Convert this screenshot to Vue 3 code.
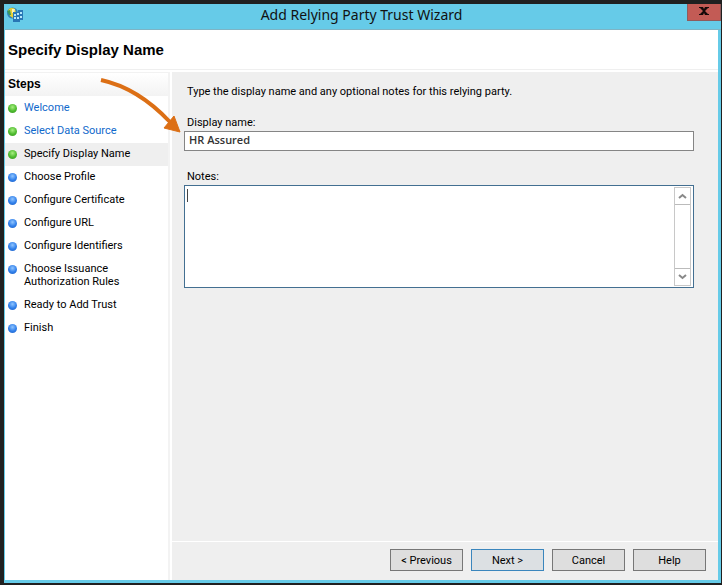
<script setup>
import { ref } from 'vue'

const steps = [
  { label: 'Welcome', state: 'done', visited: true },
  { label: 'Select Data Source', state: 'done', visited: true },
  { label: 'Specify Display Name', state: 'done', current: true },
  { label: 'Choose Profile', state: 'todo' },
  { label: 'Configure Certificate', state: 'todo' },
  { label: 'Configure URL', state: 'todo' },
  { label: 'Configure Identifiers', state: 'todo' },
  { label: 'Choose Issuance Authorization Rules', state: 'todo' },
  { label: 'Ready to Add Trust', state: 'todo' },
  { label: 'Finish', state: 'todo' }
]

const displayName = ref('HR Assured')
const notes = ref('')
</script>

<template>
  <div class="desktop">
    <div class="window">
      <header class="title-bar">
        <svg class="app-icon" width="18" height="18" viewBox="0 0 18 18">
          <circle cx="6.500" cy="7" r="5.500" fill="#2f83b8" />
          <path d="M2 4Q5 0 9 3L10 7L7 12L4 10Z" fill="#e6cf35" />
          <path d="M1 5L4 4L5 9L3 9Z" fill="#3b9a5a" />
          <path d="M6 3L9 3L8 7L6 7Z" fill="#f7f2bb" />
          <path d="M7 6H12V4H17V14H14V16H7Z" fill="#2877b5" />
          <path d="M8 8h2v2h-2zM11 7h2v2h-2zM14 6h2v2h-2zM8 11h2v2h-2zM11 11h2v2h-2zM14 10h2v2h-2z" fill="#b5e7fa" />
        </svg>
        <h1 class="title">Add Relying Party Trust Wizard</h1>
        <button class="close" aria-label="Close">
          <svg width="10" height="8" viewBox="0 0 10 8">
            <path d="M0 0H4L5 2L6 0H10V1H9L6 4L9 7H10V8H6L5 6L4 8H0V7H1L4 4L1 1H0Z" fill="#160808" />
          </svg>
        </button>
      </header>

      <div class="page-header">
        <h2>Specify Display Name</h2>
      </div>

      <div class="body">
        <nav class="sidebar">
          <h3 class="steps-title">Steps</h3>
          <ul class="steps">
            <li v-for="step in steps" :key="step.label" class="step" :class="{ current: step.current }">
              <span class="dot" :class="step.state"></span>
              <a v-if="step.visited" href="#" class="step-label">{{ step.label }}</a>
              <span v-else class="step-label">{{ step.label }}</span>
            </li>
          </ul>
        </nav>

        <main class="content">
          <div class="form">
            <p class="intro">Type the display name and any optional notes for this relying party.</p>
            <label for="display-name">Display name:</label>
            <input id="display-name" v-model="displayName" type="text" />
            <label for="notes">Notes:</label>
            <div class="notes-box">
              <textarea id="notes" v-model="notes"></textarea>
              <span class="caret"></span>
              <div class="scrollbar">
                <button aria-label="Scroll up">
                  <svg width="9" height="6" viewBox="0 0 9 6"><path d="M1 5L4.500 2L8 5" /></svg>
                </button>
                <button aria-label="Scroll down">
                  <svg width="9" height="6" viewBox="0 0 9 6"><path d="M1 1L4.500 4L8 1" /></svg>
                </button>
              </div>
            </div>
          </div>
          <footer class="actions">
            <button>&lt; Previous</button>
            <button class="primary">Next &gt;</button>
            <button>Cancel</button>
            <button>Help</button>
          </footer>
        </main>
      </div>
    </div>

    <!-- callout pointing at the display name field -->
    <svg class="callout" width="84" height="58" viewBox="0 0 84 58">
      <path d="M3 4Q40 12 72 46" fill="none" stroke="#dc6f15" stroke-width="4" />
      <path d="M82 56L76 40L66 52Z" fill="#dc6f15" stroke="#dc6f15" />
    </svg>
  </div>
</template>

<style>
body {
  margin: 0;
}
</style>

<style scoped>
* {
  box-sizing: border-box;
}

.desktop {
  position: relative;
  height: 100vh;
  padding: 4px 1px 2px 4px;
  background: #202020;
  font-family: Roboto, "Liberation Sans", sans-serif;
  font-size: 11px;
  line-height: 13px;
  color: #000;
}

.window {
  display: flex;
  flex-direction: column;
  height: 100%;
  padding: 0 3px 3px 1px;
  background: #66cbe8;
}

.title-bar {
  display: flex;
  align-items: flex-start;
  flex: none;
  height: 26px;
  margin-right: -3px;
  border-bottom: 1px solid #7eb4c4;
}

.app-icon {
  margin: 2px 0 0 1px;
}

.title {
  flex: 1;
  margin: 0;
  padding-left: 12px;
  font-family: "Noto Sans", "Open Sans", sans-serif;
  font-size: 14px;
  font-weight: 400;
  line-height: 22px;
  text-align: center;
  color: #111;
}

.close {
  display: flex;
  justify-content: center;
  width: 34px;
  height: 17px;
  padding: 3px 0 0;
  border: 1px solid #8f5b5c;
  border-top: 0;
  background: #c35b55;
}

.page-header {
  flex: none;
  height: 42px;
  border-bottom: 2px solid #fff;
  background: #fff;
}

.page-header h2 {
  height: 40px;
  margin: 0;
  padding-left: 3px;
  border-bottom: 1px solid #efefef;
  font-family: "Liberation Sans", Arial, sans-serif;
  font-size: 15px;
  font-weight: 700;
  line-height: 40px;
}

.body {
  display: flex;
  flex: 1;
  min-height: 0;
  background: #fff;
}

.sidebar {
  flex: none;
  width: 165px;
  margin-right: 2px;
  border-right: 2px solid #f3f3f3;
}

.steps-title {
  height: 24px;
  margin: 0 0 1px;
  padding-left: 3px;
  border-top: 1px solid #f2f2f2;
  background: linear-gradient(#fff, #f3f3f3);
  font-family: "Liberation Sans", Arial, sans-serif;
  font-size: 12px;
  font-weight: 700;
  line-height: 23px;
}

.steps {
  margin: 0;
  padding: 0;
  list-style: none;
}

.step {
  display: flex;
  align-items: flex-start;
  gap: 7px;
  padding: 4px 24px 6px 3px;
}

.step.current {
  background: #efefef;
}

.dot {
  flex: none;
  width: 9px;
  height: 9px;
  margin-top: 3px;
  border-radius: 50%;
}

.dot.done {
  background: radial-gradient(circle at 50% 35%, #a7ef80, #4bb92c 55%, #43972e);
}

.dot.todo {
  background: radial-gradient(circle at 50% 35%, #90c5ff, #2e7eea 55%, #2863c0);
}

.step-label {
  flex: none;
  max-width: 120px;
}

a.step-label {
  color: #1069cb;
  text-decoration: none;
}

.content {
  display: flex;
  flex: 1;
  flex-direction: column;
  min-width: 0;
  background: #efefef;
}

.form {
  display: flex;
  flex: 1;
  flex-direction: column;
  padding: 13px 24px 0 12px;
}

.intro {
  margin: 0 0 18px;
  padding-left: 3px;
}

label {
  padding: 0 0 2px 3px;
}

input {
  height: 20px;
  margin-bottom: 19px;
  padding: 0 4px 4px;
  border: 1px solid #858585;
  border-radius: 0;
  outline: 0;
  background: #fff;
  font-family: "Open Sans", "Noto Sans", sans-serif;
  font-size: 11px;
  font-weight: 600;
  color: #333;
}

.notes-box {
  position: relative;
  display: flex;
  height: 103px;
  padding: 1px 2px 1px 1px;
  border: 1px solid #436f91;
  background: #fff;
}

textarea {
  flex: 1;
  padding: 2px;
  border: 0;
  outline: 0;
  background: none;
  font: inherit;
  resize: none;
}

.caret {
  position: absolute;
  top: 3px;
  left: 2px;
  width: 1px;
  height: 13px;
  background: #444;
}

.scrollbar {
  display: flex;
  flex-direction: column;
  justify-content: space-between;
  width: 17px;
  border: 1px solid #c8c8c8;
}

.scrollbar button {
  display: flex;
  align-items: center;
  justify-content: center;
  height: 17px;
  padding: 0;
  border: 0;
  border-bottom: 1px solid #bbb;
  background: #fff;
}

.scrollbar button:last-child {
  border-top: 1px solid #bbb;
  border-bottom: 0;
}

.scrollbar path {
  fill: none;
  stroke: #888;
  stroke-width: 2;
}

.actions {
  display: flex;
  justify-content: flex-end;
  gap: 8px;
  padding: 7px 12px 9px;
  border-top: 1px solid #fff;
}

.actions button {
  width: 73px;
  height: 22px;
  padding: 0;
  border: 1px solid #777;
  border-radius: 0;
  background: #dedede;
  font: inherit;
  color: #000;
}

.actions .primary {
  border-color: #3b86bd;
  background: #dce0e3;
}

.callout {
  position: absolute;
  top: 76px;
  left: 98px;
  pointer-events: none;
}
</style>
